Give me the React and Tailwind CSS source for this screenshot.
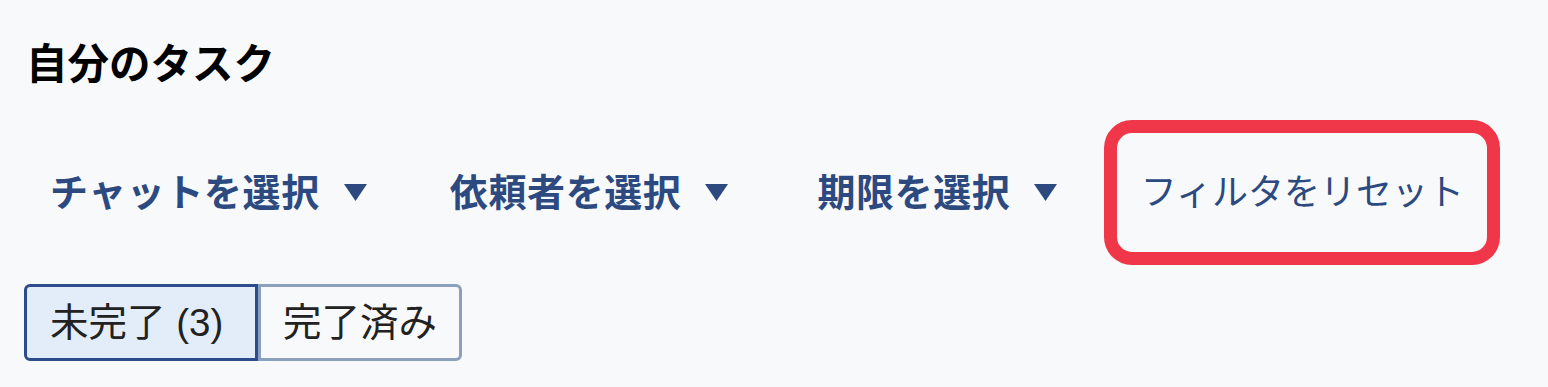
import React, { useState } from 'react';

const filters = ['チャットを選択', '依頼者を選択', '期限を選択'];
const filterMargins = ['ml-[26px]', 'ml-[83px]', 'ml-[89px]'];

function Caret() {
  return (
    <svg width="23" height="17" viewBox="0 0 23 17" className="shrink-0">
      <path d="M0 0 H23 L11.5 17 Z" fill="#2c4a7f" />
    </svg>
  );
}

export default function App() {
  const [tab, setTab] = useState('open');

  return (
    <div className="min-h-screen bg-[#f8f9fb] font-['Liberation_Sans','Noto_Sans_CJK_JP',sans-serif] pl-[24px] pt-[40px]">
      <h1 className="text-[41.5px] leading-[50px] font-bold text-black pl-[2px]">自分のタスク</h1>

      {/* filter bar */}
      <div className="flex items-center mt-[30px]">
        {filters.map((label, i) => (
          <button
            key={label}
            type="button"
            className={`flex items-center gap-[24px] text-[38px] leading-[48px] font-bold text-[#2c4a7f] tracking-[0.6px] ${filterMargins[i]}`}
          >
            <span>{label}</span>
            <Caret />
          </button>
        ))}
        <button
          type="button"
          className="ml-[47px] w-[396px] h-[145px] border-[13px] border-[#ef3749] rounded-[28px] text-[36px] leading-[48px] text-[#2c4a7f] flex items-center justify-center"
        >
          フィルタをリセット
        </button>
      </div>

      {/* tabs */}
      <div className="flex mt-[19px]">
        <button
          type="button"
          onClick={() => setTab('open')}
          className={`w-[234px] h-[77px] pl-[23px] text-left text-[38.5px] leading-[48px] text-[#222] rounded-l-[6px] border-[3px] ${tab === 'open' ? 'bg-[#e3edf9] border-[#2c4c8c]' : 'bg-[#f8f9fb] border-[#8aa0bc]'}`}
        >
          未完了 (3)
        </button>
        <button
          type="button"
          onClick={() => setTab('done')}
          className={`w-[204px] h-[77px] text-center text-[38.5px] leading-[48px] text-[#222] rounded-r-[6px] border-[3px] ${tab === 'done' ? 'bg-[#e3edf9] border-[#2c4c8c]' : 'bg-[#f8f9fb] border-[#8aa0bc]'}`}
        >
          完了済み
        </button>
      </div>
    </div>
  );
}
